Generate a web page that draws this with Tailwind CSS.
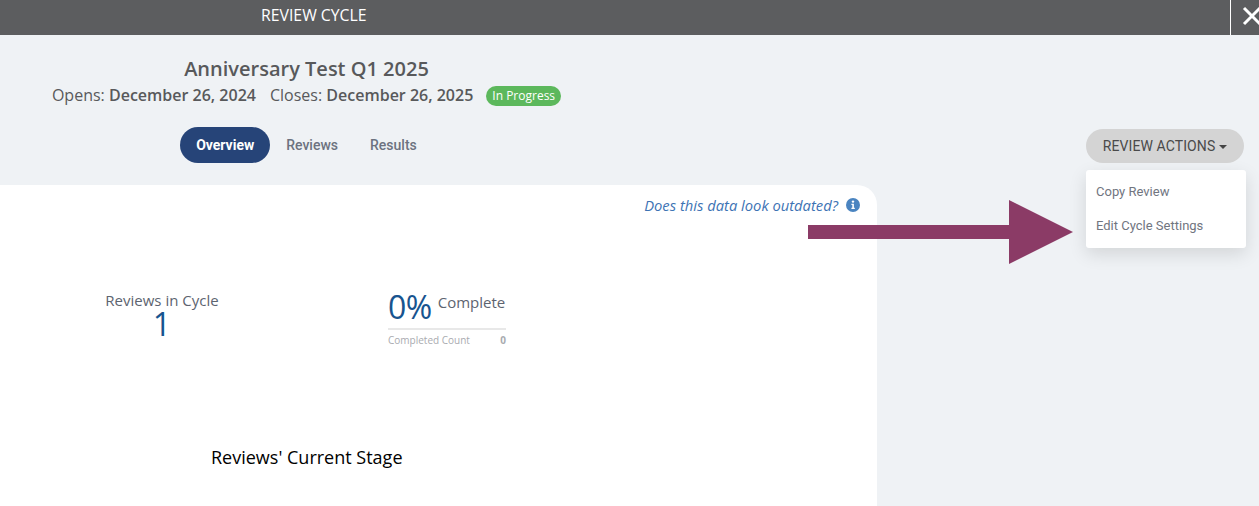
<!DOCTYPE html>
<html>
<head>
<meta charset="utf-8">
<script src="https://cdn.jsdelivr.net/npm/@tailwindcss/browser@4"></script>
</head>
<body class="bg-[#eff2f5] font-['Open_Sans',sans-serif] overflow-hidden">
<div class="relative w-[1259px] h-[506px] overflow-hidden">
  <header class="flex h-[35px] bg-[#5c5d5f] text-white">
    <div class="w-[1230px] shrink-0 pl-[261px] pt-[5px] text-[15.8px] leading-[20px]">REVIEW CYCLE</div>
    <div class="w-px shrink-0 bg-white"></div>
    <div class="flex-1 pl-[12px] pt-[7px]">
      <svg width="22" height="18" viewBox="0 0 22 18" class="block shrink-0 overflow-visible"><path d="M1 1 L17 17 M17 1 L1 17" stroke="#fff" stroke-width="3" fill="none"/></svg>
    </div>
  </header>

  <section class="flex h-[150px]">
    <div class="w-[613px] shrink-0 flex flex-col items-center">
      <h1 class="mt-[21px] text-[20px] leading-[26px] font-semibold text-[#58595b]">Anniversary Test Q1 2025</h1>
      <div class="mt-[1px] flex items-center text-[16px] leading-[24px] text-[#58595b] whitespace-nowrap">
        <span>Opens: <b class="font-semibold">December 26, 2024</b></span>
        <span class="ml-[14px]">Closes: <b class="font-semibold">December 26, 2025</b></span>
        <span class="ml-[13px] mt-[1px] rounded-full bg-[#5cb85c] px-[6px] text-[12px] leading-[20px] text-white">In Progress</span>
      </div>
      <nav class="mt-[20px] mr-[16px] flex items-center font-['Roboto',sans-serif] text-[14px] font-medium text-[#6c7280]">
        <a class="h-[36px] w-[90px] rounded-full bg-[#264478] text-center leading-[36px] font-bold text-white">Overview</a>
        <a class="ml-[16px]">Reviews</a>
        <a class="ml-[32px]">Results</a>
      </nav>
    </div>
    <div class="ml-[473px] mt-[94px]">
      <button class="flex h-[34px] w-[158px] items-center justify-center rounded-full bg-[#d4d4d4] font-['Roboto',sans-serif] text-[14px] tracking-[0.1px] text-[#4a4a4a]">
        REVIEW ACTIONS<span class="ml-[4px] mt-[1px] border-x-[4px] border-t-[4px] border-x-transparent border-t-[#444]"></span>
      </button>
    </div>
  </section>

  <main class="w-[877px] h-[321px] rounded-tr-[20px] bg-white">
    <div class="flex items-center justify-end pt-[10px] pr-[17px]">
      <span class="text-[14.75px] italic leading-[20px] text-[#3d73b4]">Does this data look outdated?</span>
      <svg class="ml-[8px]" width="14" height="14" viewBox="0 0 14 14"><circle cx="7" cy="7" r="7" fill="#4a84c0"/><circle cx="7" cy="3.6" r="1.2" fill="#fff"/><path d="M5.4 5.8 H7.9 V9.8 H8.8 V11 H5.4 V9.8 H6.3 V7 H5.4 Z" fill="#fff"/></svg>
    </div>
    <div class="flex mt-[75px]">
      <div class="ml-[105px] w-[114px] text-center">
        <div class="text-[15px] leading-[20px] text-[#5d6470] whitespace-nowrap">Reviews in Cycle</div>
        <div class="text-[32px] leading-[28px] text-[#17548f]">1</div>
      </div>
      <div class="ml-[169px] w-[118px]">
        <div class="flex h-[40px] items-start border-b-2 border-[#e8e8e8]">
          <span class="text-[32px] leading-[34px] tracking-[-0.5px] text-[#17548f]">0%</span>
          <span class="ml-[6px] mt-[2px] text-[15px] leading-[20px] text-[#5d6470]">Complete</span>
        </div>
        <div class="flex justify-between pt-[3px] text-[10px] leading-[14px] text-[#a9abb0]">
          <span>Completed Count</span><b class="font-bold">0</b>
        </div>
      </div>
    </div>
    <h2 class="mt-[98px] ml-[211px] text-[18px] leading-[24px] text-black">Reviews' Current Stage</h2>
  </main>

  <div class="absolute left-[1086px] top-[170px] w-[160px] h-[78px] rounded-[3px] bg-white py-[5px] font-['Roboto',sans-serif] text-[13px] text-[#71757f] shadow-[0_6px_18px_rgba(0,0,0,0.12)]">
    <div class="h-[34px] pl-[10px] leading-[34px]">Copy Review</div>
    <div class="h-[34px] pl-[10px] leading-[34px]">Edit Cycle Settings</div>
  </div>

  <svg class="absolute left-[808px] top-[200px]" width="266" height="64" viewBox="0 0 266 64"><path d="M0 25 H201 V0 L265 32 L201 64 V39 H0 Z" fill="#8b3b66"/></svg>
</div>
</body>
</html>
